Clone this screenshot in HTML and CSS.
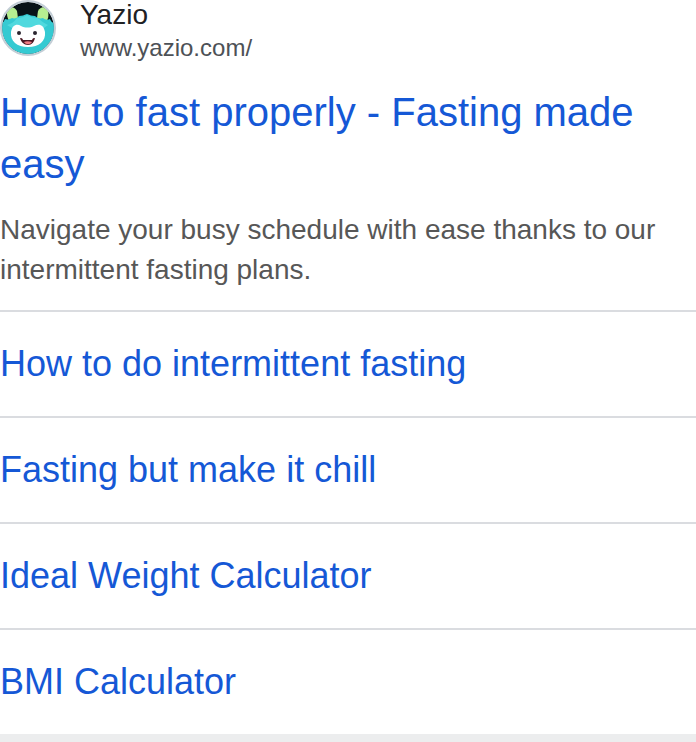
FILE: index.html
```html
<!DOCTYPE html>
<html lang="en">
<head>
    <meta charset="UTF-8">
    <meta name="viewport" content="width=device-width, initial-scale=1">
    <title>Yazio</title>
    <link rel="stylesheet" href="styles.css">
</head>
<body>

    <main class="result">
        <!-- Site icon, name and address -->
        <div class="site">
            <svg class="site-icon" viewBox="0 0 56 56" aria-hidden="true">
                <defs>
                    <clipPath id="iconClip">
                        <circle cx="28" cy="28" r="26"/>
                    </clipPath>
                </defs>
                <g clip-path="url(#iconClip)">
                    <rect width="56" height="56" fill="#081318"/>
                    <path d="M8 8c2-2 7-1 9 3l1 7-8 4c-3-3-4-10-2-14z" fill="#b6ee91"/>
                    <path d="M47 8c-2-2-7-1-9 3l-1 7 9 4c3-3 3-10 1-14z" fill="#b6ee91"/>
                    <path d="M0 24c2-1 4-2 5-5 3 1 5 0 7-1 3 1 5 0 7-2 3 0 5-1 8-2 3 1 5 2 8 2 2 2 5 3 8 2 2 2 5 2 7 1 1 3 3 4 6 5v32H0z" fill="#35cad2"/>
                    <path d="M17 18c4 0 7-1 10-3 3 2 7 3 11 3 3 3 6 5 10 7l-4 3H12l-5-3c4-1 7-3 10-7z" fill="#50d9de"/>
                    <path d="M11 32c1-7 6-9 10-6 4 2 9 2 13 0 5-3 10-1 11 6 1 9-6 15-17 15s-18-6-17-15z" fill="#fff"/>
                    <circle cx="19" cy="33" r="2" fill="#2b2530"/>
                    <circle cx="35" cy="33" r="2" fill="#2b2530"/>
                    <path d="M20 38c5 1 10 1 15 0-1 4-3 7-7 7s-7-3-8-7z" fill="#4a1824"/>
                    <path d="M24 42c2-1 5-1 8 0-2 3-6 3-8 0z" fill="#ef7c83"/>
                    <path d="M22 38h11l-1 2h-9z" fill="#fff"/>
                </g>
                <circle cx="28" cy="28" r="27" fill="none" stroke="#c3ced6" stroke-width="2"/>
            </svg>
            <div class="site-text">
                <div class="site-name">Yazio</div>
                <div class="site-url">www.yazio.com/</div>
            </div>
        </div>

        <h1 class="title"><a href="#fasting">How to fast properly - Fasting made easy</a></h1>
        <p class="description">Navigate your busy schedule with ease thanks to our intermittent fasting plans.</p>

        <nav class="links">
            <a href="#intermittent">How to do intermittent fasting</a>
            <a href="#chill">Fasting but make it chill</a>
            <a href="#weight">Ideal Weight Calculator</a>
            <a href="#bmi">BMI Calculator</a>
        </nav>
    </main>

</body>
</html>
```

FILE: styles.css
```css
body {
    margin: 0;
    background-color: #fff;
    font-family: Arial, "Liberation Sans", sans-serif;
}

a {
    color: #1558d6;
    text-decoration: none;
}

a:hover {
    text-decoration: underline;
}

.result {
    border-bottom: 8px solid #ecedee;
}

.site {
    display: flex;
    gap: 24px;
}

.site-icon {
    width: 56px;
    height: 56px;
}

.site-name {
    color: #202124;
    font-size: 28px;
    line-height: 30px;
}

.site-url {
    color: #4d5156;
    font-size: 24px;
    line-height: 36px;
}

.title {
    margin: 20px 0;
    font-size: 40px;
    font-weight: normal;
    line-height: 52px;
}

.description {
    margin: 0 0 20px;
    color: #575757;
    font-size: 28px;
    line-height: 40px;
}

.links a {
    display: block;
    padding: 32px 0;
    border-top: 2px solid #dadce0;
    font-size: 36px;
    line-height: 40px;
}
```
